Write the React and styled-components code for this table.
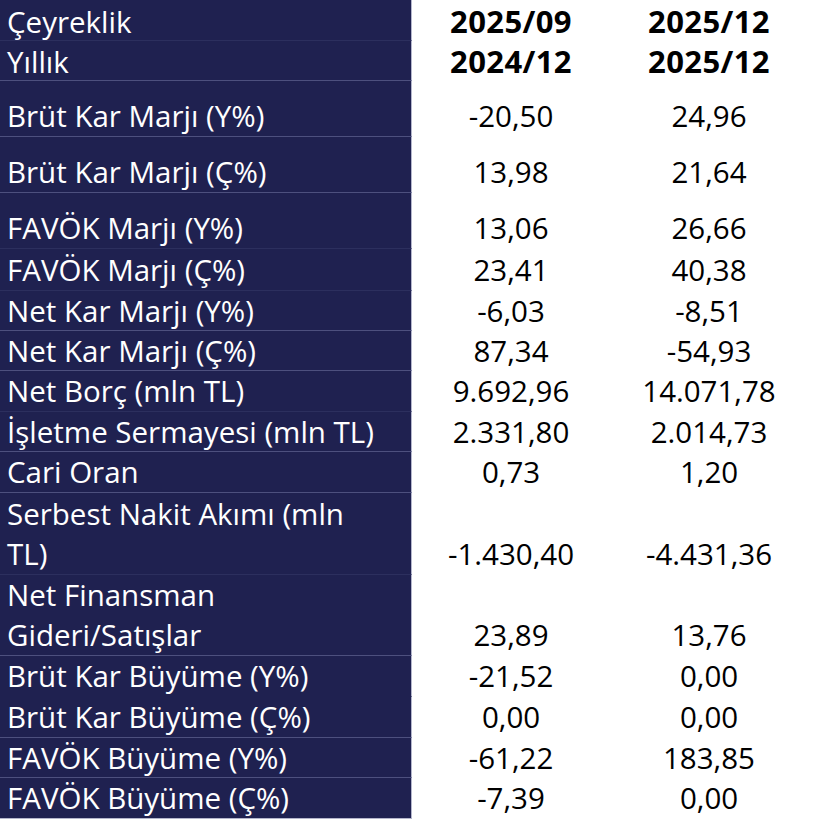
import React from "react";
import styled, { createGlobalStyle } from "styled-components";

const GlobalStyle = createGlobalStyle`
  html, body {
    margin: 0;
    padding: 0;
    background: #ffffff;
  }
  body {
    font-family: "Open Sans", "Noto Sans", "DejaVu Sans", sans-serif;
  }
`;

const lineColors = {
  strong: "#4d507e",
  faint: "#2c2f5e",
  none: "#1f2150",
};

const Table = styled.div`
  display: flex;
  flex-direction: column;
  width: 808px;
`;

const Row = styled.div`
  display: grid;
  grid-template-columns: 412px 198px 198px;
  height: ${(p) => p.h}px;
  align-items: stretch;
`;

const LabelCell = styled.div`
  box-sizing: border-box;
  display: flex;
  align-items: flex-end;
  padding-left: 7px;
  background: #1f2150;
  color: #ffffff;
  font-size: 29.5px;
  line-height: 40px;
  white-space: pre-line;
  border-right: 1px solid #b4b6cc;
  border-top: ${(p) => (p.line ? `1px solid ${lineColors[p.line]}` : "0")};
  border-bottom: ${(p) => (p.last ? "1px solid #b4b6cc" : "0")};
`;

const ValueCell = styled.div`
  box-sizing: border-box;
  display: flex;
  align-items: flex-end;
  justify-content: center;
  color: #000000;
  font-size: 29.5px;
  line-height: 40px;
  padding-bottom: ${(p) => (p.last ? "1px" : "0")};
`;

const HeadCell = styled.div`
  display: flex;
  align-items: flex-start;
  justify-content: center;
  color: #000000;
  font-size: 31px;
  font-weight: 700;
  letter-spacing: 0.4px;
  line-height: 42px;
`;

const rows = [
  { label: "Çeyreklik", a: "2025/09", b: "2025/12", h: 40, head: true },
  { label: "Yıllık", a: "2024/12", b: "2025/12", h: 40, head: true, line: "faint" },
  { label: "Brüt Kar Marjı (Y%)", a: "-20,50", b: "24,96", h: 56, line: "strong" },
  { label: "Brüt Kar Marjı (Ç%)", a: "13,98", b: "21,64", h: 56, line: "strong" },
  { label: "FAVÖK Marjı (Y%)", a: "13,06", b: "26,66", h: 56, line: "strong" },
  { label: "FAVÖK Marjı (Ç%)", a: "23,41", b: "40,38", h: 42, line: "faint" },
  { label: "Net Kar Marjı (Y%)", a: "-6,03", b: "-8,51", h: 40, line: "faint" },
  { label: "Net Kar Marjı (Ç%)", a: "87,34", b: "-54,93", h: 40, line: "strong" },
  { label: "Net Borç (mln TL)", a: "9.692,96", b: "14.071,78", h: 41, line: "strong" },
  { label: "İşletme Sermayesi (mln TL)", a: "2.331,80", b: "2.014,73", h: 40, line: "faint" },
  { label: "Cari Oran", a: "0,73", b: "1,20", h: 41, line: "strong" },
  { label: "Serbest Nakit Akımı (mln\nTL)", a: "-1.430,40", b: "-4.431,36", h: 82, line: "strong" },
  { label: "Net Finansman\nGideri/Satışlar", a: "23,89", b: "13,76", h: 81, line: "faint" },
  { label: "Brüt Kar Büyüme (Y%)", a: "-21,52", b: "0,00", h: 41, line: "strong" },
  { label: "Brüt Kar Büyüme (Ç%)", a: "0,00", b: "0,00", h: 41, line: "none" },
  { label: "FAVÖK Büyüme (Y%)", a: "-61,22", b: "183,85", h: 40, line: "strong" },
  { label: "FAVÖK Büyüme (Ç%)", a: "-7,39", b: "0,00", h: 42, line: "strong", last: true },
];

export default function App() {
  return (
    <>
      <GlobalStyle />
      <Table>
        {rows.map((r) => {
          const Cell = r.head ? HeadCell : ValueCell;
          return (
            <Row key={r.label} h={r.h}>
              <LabelCell line={r.line} last={r.last}>
                {r.label}
              </LabelCell>
              <Cell last={r.last}>{r.a}</Cell>
              <Cell last={r.last}>{r.b}</Cell>
            </Row>
          );
        })}
      </Table>
    </>
  );
}
